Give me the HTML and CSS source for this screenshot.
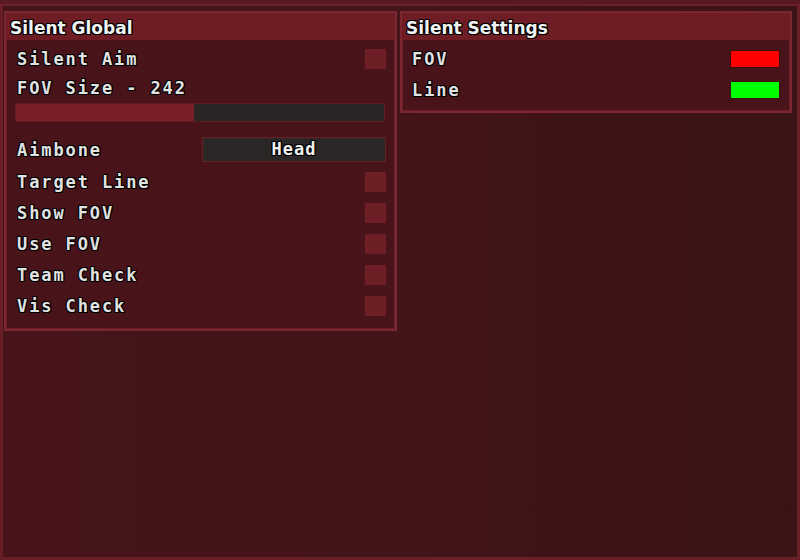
FILE: index.html
```html
<!DOCTYPE html>
<html lang="en">

<head>
  <meta charset="UTF-8">
  <title>Silent</title>
  <link rel="stylesheet" href="styles.css">
</head>
<body>
  <div class="window">
    <div class="titlebar"></div>
    <div class="columns">
      <div class="panel">
        <div class="panel-title">Silent Global</div>
        <div class="panel-body">
          <div class="row">
            <span>Silent Aim</span>
            <i class="check"></i>
          </div>
          <div class="row row-label">
            <span>FOV Size - 242</span>
          </div>
          <div class="slider">
            <div class="slider-fill" style="width: 48.4%"></div>
          </div>
          <div class="row row-combo">
            <span>Aimbone</span>
            <div class="combo">Head</div>
          </div>
          <div class="row">
            <span>Target Line</span>
            <i class="check"></i>
          </div>
          <div class="row">
            <span>Show FOV</span>
            <i class="check"></i>
          </div>
          <div class="row">
            <span>Use FOV</span>
            <i class="check"></i>
          </div>
          <div class="row">
            <span>Team Check</span>
            <i class="check"></i>
          </div>
          <div class="row">
            <span>Vis Check</span>
            <i class="check"></i>
          </div>
        </div>
      </div>
      <div class="panel">
        <div class="panel-title">Silent Settings</div>
        <div class="panel-body panel-body-right">
          <div class="row">
            <span>FOV</span>
            <i class="swatch red"></i>
          </div>
          <div class="row">
            <span>Line</span>
            <i class="swatch green"></i>
          </div>
        </div>
      </div>
    </div>
  </div>
</body>

</html>
```

FILE: styles.css
```css
* {
  margin: 0;
  padding: 0;
  box-sizing: border-box;
}

body {
  width: 800px;
  height: 560px;
  overflow: hidden;
  background: #3c1416;
}

.window {
  width: 800px;
  height: 560px;
  border: 3px solid #6a1f27;
  border-top: none;
  background: linear-gradient(to right, #461419 0%, #431418 50%, #3a1315 100%);
}

.titlebar {
  height: 6px;
  background: #581a20;
  border-bottom: 2px solid #6b2129;
  margin: 0 -3px 5px;
}

.columns {
  display: grid;
  grid-template-columns: 393px 392px;
  column-gap: 3px;
  align-items: start;
  padding-left: 1px;
}

.panel {
  border: 2px solid #7b2630;
  background: #6f1d24;
}

.panel-title {
  height: 27px;
  padding: 5px 0 0 4px;
  font-family: "DejaVu Sans", sans-serif;
  font-weight: bold;
  font-size: 17px;
  line-height: 20px;
  color: #f2f2f2;
  text-shadow: -1px -1px 0 #000, 1px -1px 0 #000, -1px 1px 0 #000, 1px 1px 0 #000, 0 1px 0 #000, 0 -1px 0 #000, 1px 0 0 #000, -1px 0 0 #000;
}

.panel-body {
  margin: 0 1px 1px;
  padding: 4px 0 7px;
  background: #48141a;
}

.panel-body-right {
  padding-bottom: 5px;
}

.row {
  height: 31px;
  display: flex;
  align-items: center;
  justify-content: space-between;
  padding: 0 8px 0 10px;
  font-family: "DejaVu Sans Mono", monospace;
  font-weight: bold;
  font-size: 17px;
  letter-spacing: 1.9px;
  color: #e2e2e2;
  text-shadow: -1px -1px 0 #000, 1px -1px 0 #000, -1px 1px 0 #000, 1px 1px 0 #000, 0 1px 0 #000, 0 -1px 0 #000, 1px 0 0 #000, -1px 0 0 #000;
}

.row:first-child {
  height: 30px;
}

.row-label {
  height: 28px;
}

.row-combo {
  height: 33px;
}

.check {
  width: 21px;
  height: 20px;
  background: #6e1f26;
  box-shadow: 0 0 1px #5a181e;
}

.slider {
  height: 19px;
  margin: 1px 9px 11px 8px;
  background: #2a2626;
  border: 1px solid #5e1c22;
}

.slider-fill {
  height: 100%;
  background: #7a1f27;
}

.combo {
  width: 184px;
  height: 25px;
  background: #2b2727;
  border: 1px solid #6a1f25;
  text-align: center;
  line-height: 22px;
  letter-spacing: 1px;
  color: #f0f0f0;
}

.panel-body-right .row {
  padding: 0 9px 0 9px;
}

.swatch {
  width: 50px;
  height: 18px;
  border: 1px solid #3a1010;
}

.red {
  background: #ff0000;
}

.green {
  background: #00ff00;
}
```
